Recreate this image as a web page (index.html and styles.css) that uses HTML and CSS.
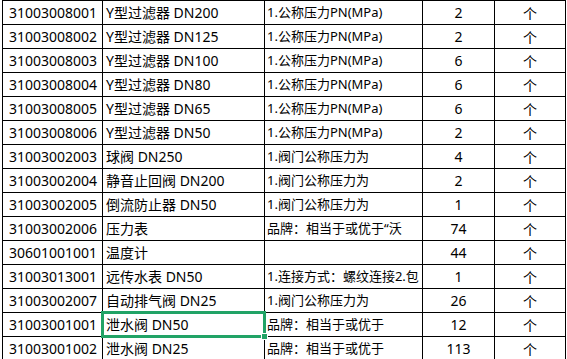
FILE: index.html
```html
<!DOCTYPE html>
<html lang="zh">
<head>
<meta charset="utf-8">
<link rel="stylesheet" href="styles.css">
</head>
<body>
<div class="sheet">
  <div class="c code">31003008001</div><div class="c name">Y型过滤器 DN200</div><div class="c desc">1.公称压力PN(MPa)</div><div class="c qty">2</div><div class="c unit">个</div>
  <div class="c code">31003008002</div><div class="c name">Y型过滤器 DN125</div><div class="c desc">1.公称压力PN(MPa)</div><div class="c qty">2</div><div class="c unit">个</div>
  <div class="c code">31003008003</div><div class="c name">Y型过滤器 DN100</div><div class="c desc">1.公称压力PN(MPa)</div><div class="c qty">6</div><div class="c unit">个</div>
  <div class="c code">31003008004</div><div class="c name">Y型过滤器 DN80</div><div class="c desc">1.公称压力PN(MPa)</div><div class="c qty">6</div><div class="c unit">个</div>
  <div class="c code">31003008005</div><div class="c name">Y型过滤器 DN65</div><div class="c desc">1.公称压力PN(MPa)</div><div class="c qty">6</div><div class="c unit">个</div>
  <div class="c code">31003008006</div><div class="c name">Y型过滤器 DN50</div><div class="c desc">1.公称压力PN(MPa)</div><div class="c qty">2</div><div class="c unit">个</div>
  <div class="c code">31003002003</div><div class="c name">球阀 DN250</div><div class="c desc">1.阀门公称压力为</div><div class="c qty">4</div><div class="c unit">个</div>
  <div class="c code">31003002004</div><div class="c name">静音止回阀 DN200</div><div class="c desc">1.阀门公称压力为</div><div class="c qty">2</div><div class="c unit">个</div>
  <div class="c code">31003002005</div><div class="c name">倒流防止器 DN50</div><div class="c desc">1.阀门公称压力为</div><div class="c qty">1</div><div class="c unit">个</div>
  <div class="c code">31003002006</div><div class="c name">压力表</div><div class="c desc">品牌：相当于或优于“沃</div><div class="c qty">74</div><div class="c unit">个</div>
  <div class="c code">30601001001</div><div class="c name">温度计</div><div class="c desc"></div><div class="c qty">44</div><div class="c unit">个</div>
  <div class="c code">31003013001</div><div class="c name">远传水表 DN50</div><div class="c desc">1.连接方式：螺纹连接2.包</div><div class="c qty">1</div><div class="c unit">个</div>
  <div class="c code">31003002007</div><div class="c name">自动排气阀 DN25</div><div class="c desc">1.阀门公称压力为</div><div class="c qty">26</div><div class="c unit">个</div>
  <div class="c code">31003001001</div><div class="c name selected">泄水阀 DN50<span class="handle"></span></div><div class="c desc">品牌：相当于或优于</div><div class="c qty">12</div><div class="c unit">个</div>
  <div class="c code">31003001002</div><div class="c name">泄水阀 DN25</div><div class="c desc">品牌：相当于或优于</div><div class="c qty">113</div><div class="c unit">个</div>
</div>
</body>
</html>
```

FILE: styles.css
```css
html, body {
  margin: 0;
  padding: 0;
  background: #ffffff;
  overflow: hidden;
}

.sheet {
  display: grid;
  grid-template-columns: 100px 162px 158px 72px 71px;
  grid-auto-rows: 24px;
  margin-left: 2px;
  width: max-content;
  border-left: 1px solid #000;
  border-top: 1px solid #000;
  font-family: "Noto Sans", "Noto Sans CJK SC", sans-serif;
  font-size: 14px;
  color: #000;
}

.c {
  box-sizing: border-box;
  border-right: 1px solid #000;
  border-bottom: 1px solid #000;
  display: flex;
  align-items: center;
  white-space: nowrap;
  overflow: hidden;
  line-height: 1;
}

.code {
  padding-left: 6px;
}

.name {
  padding-left: 3px;
}

.desc {
  padding-left: 2px;
  font-size: 13px;
}

.qty,
.unit {
  justify-content: center;
}

.unit {
  font-family: "Noto Sans CJK SC", sans-serif;
  font-weight: 400;
  color: #000;
}

.selected {
  position: relative;
  overflow: visible;
  z-index: 3;
}

.selected::after {
  content: "";
  position: absolute;
  left: -2px;
  top: -2px;
  right: -2px;
  bottom: -2px;
  border: 3px solid #21a366;
  pointer-events: none;
}

.handle {
  position: absolute;
  right: -4px;
  bottom: -4px;
  width: 5px;
  height: 5px;
  background: #21a366;
  border: 1px solid #fff;
  z-index: 4;
}
```
